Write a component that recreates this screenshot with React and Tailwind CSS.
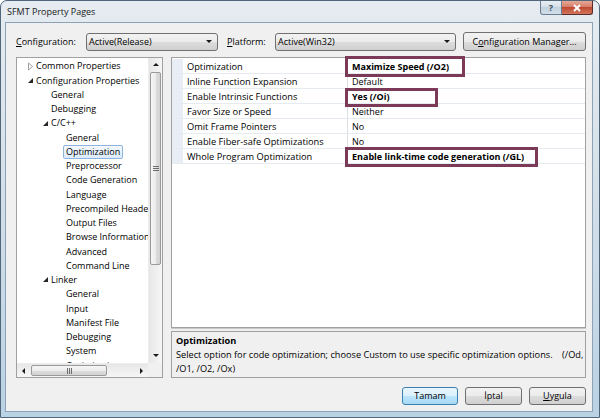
import React from 'react';

const grayBtn =
  'bg-[linear-gradient(#f2f2f2,#ebebeb_50%,#dddddd_50%,#cfcfcf)] border border-[#707070] rounded-[3px]';

const tree = [
  { t: 'Common Properties', lead: 'w-[10px]', arrow: 'closed', rest: 'w-[9px]' },
  { t: 'Configuration Properties', lead: 'w-[10px]', arrow: 'open', rest: 'w-[9px]' },
  { t: 'General', lead: 'w-[34px]' },
  { t: 'Debugging', lead: 'w-[34px]' },
  { t: 'C/C++', lead: 'w-[25px]', arrow: 'open', rest: 'w-[9px]' },
  { t: 'General', lead: 'w-[49px]' },
  { t: 'Optimization', lead: 'w-[49px]', sel: true },
  { t: 'Preprocessor', lead: 'w-[49px]' },
  { t: 'Code Generation', lead: 'w-[49px]' },
  { t: 'Language', lead: 'w-[49px]' },
  { t: 'Precompiled Headers', lead: 'w-[49px]' },
  { t: 'Output Files', lead: 'w-[49px]' },
  { t: 'Browse Information', lead: 'w-[49px]' },
  { t: 'Advanced', lead: 'w-[49px]' },
  { t: 'Command Line', lead: 'w-[49px]' },
  { t: 'Linker', lead: 'w-[25px]', arrow: 'open', rest: 'w-[9px]' },
  { t: 'General', lead: 'w-[49px]' },
  { t: 'Input', lead: 'w-[49px]' },
  { t: 'Manifest File', lead: 'w-[49px]' },
  { t: 'Debugging', lead: 'w-[49px]' },
  { t: 'System', lead: 'w-[49px]' },
  { t: 'Optimization', lead: 'w-[49px]' },
];

const props = [
  ['Optimization', 'Maximize Speed (/O2)', true],
  ['Inline Function Expansion', 'Default'],
  ['Enable Intrinsic Functions', 'Yes (/Oi)', true],
  ['Favor Size or Speed', 'Neither'],
  ['Omit Frame Pointers', 'No'],
  ['Enable Fiber-safe Optimizations', 'No'],
  ['Whole Program Optimization', 'Enable link-time code generation (/GL)', true],
];

const Arrow = ({ kind }) =>
  kind === 'open' ? (
    <svg width="9" height="9" viewBox="0 0 9 9">
      <path d="M1 7 L6 7 L6 2 Z" fill="#262626" />
    </svg>
  ) : (
    <svg width="9" height="9" viewBox="0 0 9 9">
      <path d="M1.5 1 L5.5 4.5 L1.5 8 Z" fill="none" stroke="#a0a0a0" strokeWidth="1" />
    </svg>
  );

const Tri = ({ dir }) => {
  const d = {
    down: 'M1 2 L7 2 L4 5 Z',
    up: 'M1 5 L7 5 L4 2 Z',
    left: 'M5 1 L5 7 L2 4 Z',
    right: 'M3 1 L3 7 L6 4 Z',
  }[dir];
  return (
    <svg width="8" height="8" viewBox="0 0 8 8">
      <path d={d} fill="#1a1a1a" />
    </svg>
  );
};

const Combo = ({ w, text }) => (
  <div className={`${grayBtn} ${w} h-[18px] flex items-center justify-between pl-[2px] pr-[4px]`}>
    <span>{text}</span>
    <Tri dir="down" />
  </div>
);

const VScroll = () => (
  <div className="w-[14px] flex flex-col bg-[linear-gradient(90deg,#e7e7e7,#f6f6f6)] border-l border-[#ececec]">
    <div className="h-[14px] flex items-center justify-center">
      <Tri dir="up" />
    </div>
    <div className="h-[193px] mx-[1px] rounded-[2px] border border-[#9a9a9a] bg-[linear-gradient(90deg,#f6f6f6,#ececec_50%,#dedede_50%,#d2d2d2)] flex items-center justify-center">
      <div className="flex flex-col gap-[1px]">
        <div className="w-[6px] h-[1px] bg-[#6b6b6b]" />
        <div className="w-[6px] h-[1px] bg-[#6b6b6b]" />
        <div className="w-[6px] h-[1px] bg-[#6b6b6b]" />
      </div>
    </div>
    <div className="flex-1" />
    <div className="h-[14px] flex items-center justify-center">
      <Tri dir="down" />
    </div>
  </div>
);

const HScroll = () => (
  <div className="flex-1 h-[14px] flex bg-[linear-gradient(#e7e7e7,#f6f6f6)] border-t border-[#ececec]">
    <div className="w-[14px] flex items-center justify-center">
      <Tri dir="left" />
    </div>
    <div className="w-[76px] my-[1px] rounded-[2px] border border-[#9a9a9a] bg-[linear-gradient(#f6f6f6,#ececec_50%,#dedede_50%,#d2d2d2)] flex items-center justify-center">
      <div className="flex gap-[1px]">
        <div className="w-[1px] h-[6px] bg-[#6b6b6b]" />
        <div className="w-[1px] h-[6px] bg-[#6b6b6b]" />
        <div className="w-[1px] h-[6px] bg-[#6b6b6b]" />
      </div>
    </div>
    <div className="flex-1" />
    <div className="w-[14px] flex items-center justify-center">
      <Tri dir="right" />
    </div>
  </div>
);

export default function App() {
  return (
    <div className="w-[600px] h-[418px] flex flex-col overflow-hidden rounded-t-[7px] border border-[#52667a] bg-[linear-gradient(#e6ecf1,#d6e1ea_40%,#b9d2e4)] font-['Open_Sans','Noto_Sans',sans-serif] text-[9px] text-black">
      {/* title bar */}
      <div className="h-[21px] flex justify-between items-start">
        <div className="pl-[6px] pt-[4px] text-[9px] text-[#1a1a1a]">SFMT Property Pages</div>
        <div className="flex mr-[6px]">
          <div className="w-[22px] h-[14px] rounded-bl-[3px] border border-t-0 border-[#6a7d90] bg-[linear-gradient(#e9eff4,#d4dee7_50%,#c3d1de_50%,#d2dfea)] flex items-center justify-center text-[9px] font-bold text-[#3c4b5a] leading-none">
            ?
          </div>
          <div className="w-[31px] h-[14px] rounded-br-[3px] border border-t-0 border-l-0 border-[#5b2c2c] bg-[linear-gradient(#e6a795,#d47a64_50%,#c04a33_50%,#d2765c)] flex items-center justify-center">
            <svg width="10" height="8" viewBox="0 0 10 8">
              <path d="M2 1 L8 7 M8 1 L2 7" stroke="#ffffff" strokeWidth="2" />
            </svg>
          </div>
        </div>
      </div>

      {/* client area */}
      <div className="flex-1 ml-[4px] mr-[6px] mb-[5px] border border-[#8da2b6] bg-[#f0f0f0] flex flex-col pl-[10px] pr-[6px] pt-[9px] pb-[5px]">
        {/* top row */}
        <div className="flex items-center h-[19px]">
          <span className="w-[70px]">
            <span className="underline">C</span>onfiguration:
          </span>
          <Combo w="w-[132px]" text="Active(Release)" />
          <span className="ml-[9px] w-[48px]">
            <span className="underline">P</span>latform:
          </span>
          <Combo w="w-[181px]" text="Active(Win32)" />
          <div className={`${grayBtn} ml-[7px] w-[123px] h-[19px] flex items-center justify-center`}>
            C<span className="underline">o</span>nfiguration Manager...
          </div>
        </div>

        {/* main row */}
        <div className="flex gap-[8px] mt-[6px] h-[321px]">
          {/* tree */}
          <div className="w-[147px] border border-[#a0a0a0] bg-white flex flex-col">
            <div className="flex flex-1 min-h-0">
              <div className="flex-1 overflow-hidden pt-[1px]">
                {tree.map((r, i) => (
                  <div key={i} className="h-[14.25px] flex items-center whitespace-nowrap">
                    <div className={`${r.lead} shrink-0`} />
                    {r.arrow && (
                      <div className={`${r.rest} shrink-0 flex items-center`}>
                        <Arrow kind={r.arrow} />
                      </div>
                    )}
                    {r.sel ? (
                      <span className="-ml-[3px] px-[2px] h-[14px] flex items-center rounded-[2px] border border-[#8fb4e0] bg-[linear-gradient(#f5f9fe,#dcebfc)]">
                        {r.t}
                      </span>
                    ) : (
                      <span>{r.t}</span>
                    )}
                  </div>
                ))}
              </div>
              <VScroll />
            </div>
            <div className="flex">
              <HScroll />
              <div className="w-[14px] h-[14px] bg-[#f0f0f0]" />
            </div>
          </div>

          {/* property grid + description */}
          <div className="flex-1 flex flex-col">
            <div className="relative h-[271px]">
              <div className="h-full border border-[#a0a0a0] bg-white overflow-hidden pt-[1px]">
                {props.map(([n, v, b], i) => (
                  <div key={i} className="flex h-[15px] border-b border-[#e6eaf1]">
                    <div className="w-[11px] bg-[#e8edf6] shrink-0" />
                    <div className="w-[165px] pl-[4px] pt-[1px] flex items-center border-r border-[#dcdfe4] shrink-0 whitespace-nowrap text-[9.25px]">
                      {n}
                    </div>
                    <div className={`flex-1 pl-[4px] pt-[1px] flex items-center whitespace-nowrap ${b ? 'font-bold' : ''}`}>{v}</div>
                  </div>
                ))}
              </div>
              {/* annotation boxes */}
              <div className="absolute left-[174px] top-[-1px] w-[120px] h-[21px] border-[3px] border-[#7b3a58]" />
              <div className="absolute left-[174px] top-[31px] w-[93px] h-[19px] border-[3px] border-[#7b3a58]" />
              <div className="absolute left-[174px] top-[90px] w-[193px] h-[20px] border-[3px] border-[#7b3a58]" />
            </div>
            <div className="h-[3px] border-t border-[#c8c8c8]" />
            <div className="flex-1 border border-[#a0a0a0] bg-[#f0f0f0] pl-[4px] pt-[2px] leading-[14px] text-[9.2px]">
              <div className="font-bold">Optimization</div>
              <div className="whitespace-pre">
                {'Select option for code optimization; choose Custom to use specific optimization options.    (/Od,'}
              </div>
              <div>/O1, /O2, /Ox)</div>
            </div>
          </div>
        </div>

        {/* buttons */}
        <div className="flex justify-end gap-[7px] mt-[9px]">
          <div className="w-[56px] h-[18px] rounded-[3px] border border-[#3c7fb1] bg-[linear-gradient(#eaf6fd,#d9f0fc_50%,#bee6fd_50%,#a7d9f5)] flex items-center justify-center">
            Tamam
          </div>
          <div className={`${grayBtn} w-[57px] h-[18px] flex items-center justify-center`}>İptal</div>
          <div className={`${grayBtn} w-[57px] h-[18px] flex items-center justify-center`}>
            <span className="underline">U</span>ygula
          </div>
        </div>
      </div>
    </div>
  );
}
